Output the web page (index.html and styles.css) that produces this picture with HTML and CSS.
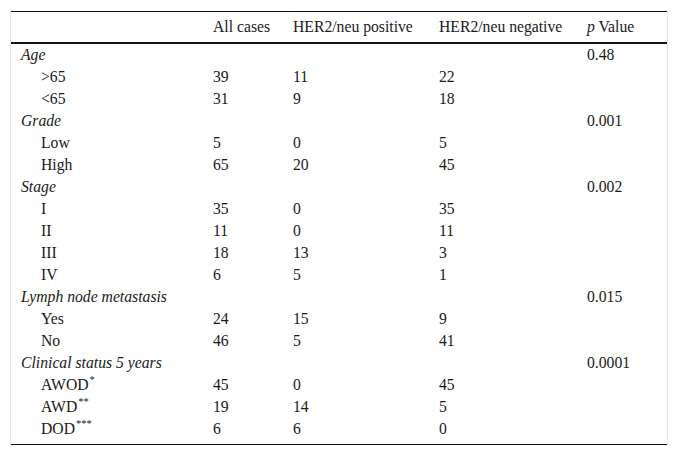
FILE: index.html
```html
<!DOCTYPE html>
<html>
<head>
<meta charset="utf-8">
<link rel="stylesheet" href="styles.css">
</head>
<body>
<div class="frame">
<table class="data">
  <colgroup>
    <col class="c1"><col class="c2"><col class="c3"><col class="c4"><col class="c5">
  </colgroup>
  <thead>
    <tr><th></th><th>All cases</th><th>HER2/neu positive</th><th>HER2/neu negative</th><th><i>p</i> Value</th></tr>
  </thead>
  <tbody>
    <tr><td class="grp">Age</td><td></td><td></td><td></td><td>0.48</td></tr>
    <tr><td class="sub">&gt;65</td><td>39</td><td>11</td><td>22</td><td></td></tr>
    <tr><td class="sub">&lt;65</td><td>31</td><td>9</td><td>18</td><td></td></tr>
    <tr><td class="grp">Grade</td><td></td><td></td><td></td><td>0.001</td></tr>
    <tr><td class="sub">Low</td><td>5</td><td>0</td><td>5</td><td></td></tr>
    <tr><td class="sub">High</td><td>65</td><td>20</td><td>45</td><td></td></tr>
    <tr><td class="grp">Stage</td><td></td><td></td><td></td><td>0.002</td></tr>
    <tr><td class="sub">I</td><td>35</td><td>0</td><td>35</td><td></td></tr>
    <tr><td class="sub">II</td><td>11</td><td>0</td><td>11</td><td></td></tr>
    <tr><td class="sub">III</td><td>18</td><td>13</td><td>3</td><td></td></tr>
    <tr><td class="sub">IV</td><td>6</td><td>5</td><td>1</td><td></td></tr>
    <tr><td class="grp">Lymph node metastasis</td><td></td><td></td><td></td><td>0.015</td></tr>
    <tr><td class="sub">Yes</td><td>24</td><td>15</td><td>9</td><td></td></tr>
    <tr><td class="sub">No</td><td>46</td><td>5</td><td>41</td><td></td></tr>
    <tr><td class="grp">Clinical status 5 years</td><td></td><td></td><td></td><td>0.0001</td></tr>
    <tr><td class="sub">AWOD<sup>*</sup></td><td>45</td><td>0</td><td>45</td><td></td></tr>
    <tr><td class="sub">AWD<sup>**</sup></td><td>19</td><td>14</td><td>5</td><td></td></tr>
    <tr class="last"><td class="sub">DOD<sup>***</sup></td><td>6</td><td>6</td><td>0</td><td></td></tr>
  </tbody>
</table>
</div>
</body>
</html>
```

FILE: styles.css
```css
html, body {
  margin: 0;
  padding: 0;
  background: #ffffff;
}
body {
  padding: 11px 0 0 10px;
  font-family: "Liberation Serif", "Times New Roman", serif;
  font-size: 15.7px;
  color: #1a1a1a;
}
.frame {
  width: 656px;
  border-left: 1px solid #e6e6e6;
  border-right: 1px solid #e6e6e6;
}
.data {
  width: 656px;
  border-collapse: collapse;
  table-layout: fixed;
  border-top: 1px solid #111;
  border-bottom: 1px solid #111;
}
.c1 { width: 192px; }
.c2 { width: 80px; }
.c3 { width: 146px; }
.c4 { width: 148px; }
.c5 { width: 90px; }
.data th {
  font-weight: normal;
  text-align: left;
  height: 30px;
  padding: 0 10px;
  border-bottom: 2px solid #111;
  line-height: 18px;
  white-space: nowrap;
}
.data td {
  height: 22px;
  padding: 0 10px;
  line-height: 18px;
  white-space: nowrap;
}
.data .last td {
  height: 22px;
  padding-bottom: 4px;
}
.grp { font-style: italic; }
.data td.sub { padding-left: 30px; }
sup {
  font-size: 10.5px;
  line-height: 0;
  vertical-align: 7px;
  margin-left: 1px;
}
```
